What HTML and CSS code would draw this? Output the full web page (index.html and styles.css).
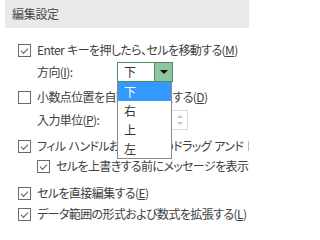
FILE: index.html
```html
<!DOCTYPE html>
<html lang="ja">
<head>
<meta charset="utf-8">
<link rel="stylesheet" href="styles.css">
</head>
<body>
<div class="page">
  <div class="header">編集設定</div>
  <div class="rows">
    <div class="row r1"><span class="cb on"></span><span class="label">Enter キーを押したら、セルを移動する(<u>M</u>)</span></div>
    <div class="row r2"><span class="label sub">方向(<u>I</u>):</span>
      <div class="select"><span class="sel-val">下</span><span class="sel-btn"><span class="tri"></span></span></div>
    </div>
    <div class="row r3"><span class="cb"></span><span class="label">小数点位置を自動的に挿入する(<u>D</u>)</span></div>
    <div class="row r4"><span class="label sub">入力単位(<u>P</u>):</span>
      <div class="spin"><span class="spin-btns"><span class="up"></span><span class="down"></span></span></div>
    </div>
    <div class="row r5"><span class="cb on"></span><span class="label">フィル ハンドルおよびセルのドラッグ アンド ドロップを使用する</span></div>
    <div class="row r6 indent"><span class="cb on"></span><span class="label">セルを上書きする前にメッセージを表示する</span></div>
    <div class="row r7"><span class="cb on"></span><span class="label">セルを直接編集する(<u>E</u>)</span></div>
    <div class="row r8"><span class="cb on"></span><span class="label">データ範囲の形式および数式を拡張する(<u>L</u>)</span></div>
  </div>
  <ul class="droplist">
    <li class="active">下</li>
    <li>右</li>
    <li>上</li>
    <li>左</li>
  </ul>
</div>
</body>
</html>
```
FILE: styles.css
```css
html, body {
  margin: 0;
  padding: 0;
  background: #ffffff;
}
body {
  width: 249px;
  height: 228px;
  overflow: hidden;
  font-family: "Noto Sans CJK JP", "Noto Sans", sans-serif;
  font-feature-settings: "palt";
  font-size: 12px;
  letter-spacing: -0.6px;
  word-spacing: 1px;
  color: #404040;
}
.page {
  position: relative;
  width: 249px;
  height: 228px;
  overflow: hidden;
}
.header {
  margin-left: 5px;
  height: 28px;
  line-height: 28px;
  padding-left: 7px;
  background: #e9e9e9;
  color: #4a4a4a;
  font-size: 12px;
  letter-spacing: -0.3px;
}
.rows {
  display: flex;
  flex-direction: column;
  padding-top: 13px;
}
.row {
  display: flex;
  align-items: center;
  height: 18px;
  padding-left: 18px;
  white-space: nowrap;
}
.row.indent { padding-left: 37px; }
.r2 { height: 20px; margin-top: 3px; }
.r3 { margin-top: 6px; }
.r4 { height: 20px; margin-top: 4px; }
.r5 { margin-top: 7px; }
.r6 { margin-top: 2px; }
.r7 { margin-top: 9px; }
.r8 { margin-top: 3px; }
.label {
  line-height: 18px;
  margin-left: 6px;
}
.label.sub {
  margin-left: 19px;
  width: 80px;
  flex: none;
}
u { text-decoration: underline; text-underline-offset: 1px; }
.cb {
  flex: none;
  width: 11px;
  height: 11px;
  border: 1px solid #6a6a6a;
  background: #fff;
  position: relative;
}
.cb.on::after {
  content: "";
  position: absolute;
  left: 2px;
  top: 0px;
  width: 6px;
  height: 3px;
  border-left: 1.5px solid #5a5a5a;
  border-bottom: 1.5px solid #5a5a5a;
  transform: translate(0px, 3px) rotate(-45deg);
  transform-origin: center;
}
.select {
  display: flex;
  width: 56px;
  height: 20px;
  box-sizing: border-box;
  border: 1px solid #4f8a62;
  background: #fff;
}
.sel-val {
  flex: 1;
  padding-left: 6px;
  line-height: 18px;
  color: #333;
}
.sel-btn {
  width: 17px;
  border-left: 1px solid #4f8a62;
  background: #8cc5a0;
  display: flex;
  align-items: center;
  justify-content: center;
}
.tri {
  width: 0;
  height: 0;
  border-left: 4px solid transparent;
  border-right: 4px solid transparent;
  border-top: 4px solid #111;
}
.spin {
  width: 71px;
  height: 20px;
  box-sizing: border-box;
  border: 1px solid #dcdcdc;
  display: flex;
  justify-content: flex-end;
}
.spin-btns {
  width: 14px;
  display: flex;
  flex-direction: column;
  align-items: center;
  justify-content: center;
  gap: 4px;
}
.up, .down {
  width: 0;
  height: 0;
  border-left: 3px solid transparent;
  border-right: 3px solid transparent;
}
.up { border-bottom: 3px solid #c4c4c4; }
.down { border-top: 3px solid #c4c4c4; }
.droplist {
  position: absolute;
  left: 117px;
  top: 82px;
  width: 55px;
  margin: 0;
  padding: 0;
  list-style: none;
  box-sizing: border-box;
  border: 1px solid #8a8a8a;
  border-top: none;
  background: #fff;
}
.droplist li {
  height: 19px;
  line-height: 19px;
  padding-left: 6px;
  color: #333;
}
.droplist li.active {
  background: #3399ff;
  color: #fff;
}
```
